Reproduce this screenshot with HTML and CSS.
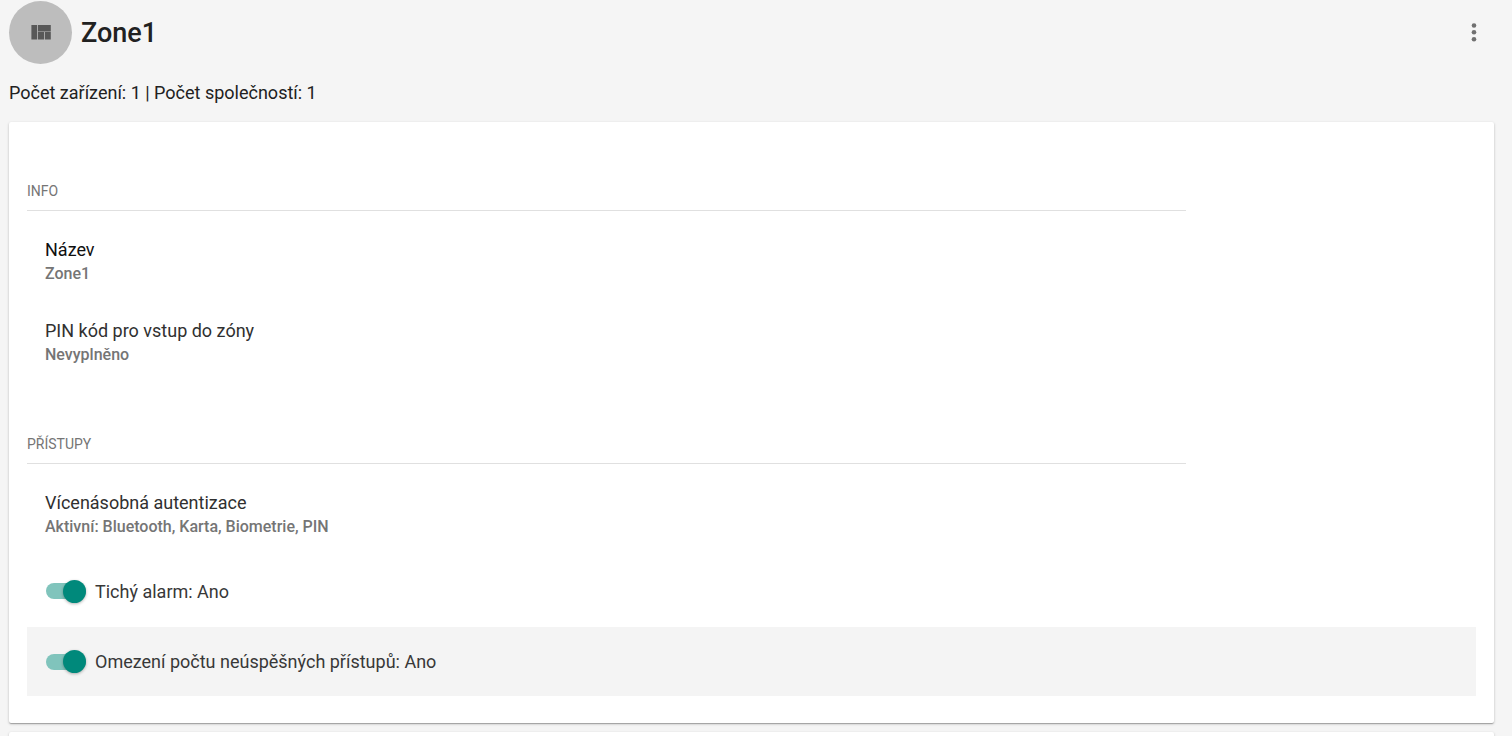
FILE: index.html
```html
<!DOCTYPE html>
<html lang="cs">
<head>
<meta charset="utf-8">
<title>Zone1</title>
<link rel="stylesheet" href="styles.css">
</head>
<body>
<main class="page">
  <header class="header">
    <span class="avatar">
      <svg class="avatar-icon" viewBox="0 0 20 15" aria-hidden="true"><path d="M.4 0h5.8v14.4H.4zM7 0h12.8v6.4H7zM7 7h6v7.4H7zM13.8 7h6v7.4h-6z"/></svg>
    </span>
    <h1 class="title">Zone1</h1>
    <button class="menu-button" type="button" aria-label="Menu">
      <svg class="menu-icon" viewBox="0 0 6 20" aria-hidden="true"><circle cx="3" cy="2.5" r="2.3"/><circle cx="3" cy="9.3" r="2.3"/><circle cx="3" cy="16.2" r="2.3"/></svg>
    </button>
  </header>
  <p class="summary">Počet zařízení: 1 | Počet společností: 1</p>

  <div class="card">
    <section class="section">
      <h2 class="section-title">INFO</h2>
      <div class="item">
        <h3 class="item-title item-title-strong">Název</h3>
        <p class="item-value">Zone1</p>
      </div>
      <div class="item">
        <h3 class="item-title">PIN kód pro vstup do zóny</h3>
        <p class="item-value">Nevyplněno</p>
      </div>
    </section>
    <section class="section">
      <h2 class="section-title">PŘÍSTUPY</h2>
      <div class="item">
        <h3 class="item-title">Vícenásobná autentizace</h3>
        <p class="item-value">Aktivní: Bluetooth, Karta, Biometrie, PIN</p>
      </div>
      <label class="toggle">
        <input class="switch" type="checkbox" role="switch" checked>
        <span>Tichý alarm: Ano</span>
      </label>
      <label class="toggle toggle-active">
        <input class="switch" type="checkbox" role="switch" checked>
        <span>Omezení počtu neúspěšných přístupů: Ano</span>
      </label>
    </section>
  </div>
  <div class="card card-rest"></div>
</main>
</body>
</html>
```
FILE: styles.css
```css
* {
  box-sizing: border-box;
}

body {
  margin: 0;
  background: #f5f5f5;
  color: #212121;
  font-family: Roboto, "Liberation Sans", sans-serif;
  font-size: 18px;
}

h1, h2, h3, p {
  margin: 0;
  font-weight: 400;
}

.page {
  display: flex;
  flex-direction: column;
  min-height: 100vh;
  padding: 1px 18px 0 9px;
}

.header {
  display: flex;
  align-items: center;
  gap: 9px;
}

.avatar {
  display: flex;
  align-items: center;
  justify-content: center;
  width: 63px;
  height: 63px;
  border-radius: 50%;
  background: #bdbdbd;
}

.avatar-icon {
  width: 20px;
  height: 15px;
  fill: #585858;
}

.title {
  flex: 1;
  font-size: 27px;
  font-weight: 500;
  line-height: 36px;
}

.menu-button {
  display: flex;
  align-items: center;
  justify-content: center;
  width: 40px;
  height: 40px;
  padding: 0;
  border: 0;
  background: none;
}

.menu-icon {
  width: 6px;
  height: 20px;
  fill: #707070;
}

.summary {
  padding: 18px 0;
  line-height: 22px;
}

.card {
  margin-bottom: 9px;
  padding: 54px 18px 27px;
  border-radius: 2px;
  background: #fff;
  box-shadow: 0 1px 3px rgba(0, 0, 0, 0.2), 0 1px 1px rgba(0, 0, 0, 0.14), 0 2px 1px -1px rgba(0, 0, 0, 0.12);
}

.card-rest {
  flex: 1;
  margin-bottom: 0;
  padding: 0;
  border-radius: 2px 2px 0 0;
}

.section + .section {
  margin-top: 46px;
}

.section-title {
  width: 80%;
  height: 35px;
  margin-bottom: 10px;
  padding-top: 4px;
  border-bottom: 1px solid #e0e0e0;
  color: #757575;
  font-size: 14px;
  line-height: 22px;
}

.item {
  display: flex;
  flex-direction: column;
  justify-content: center;
  min-height: 81px;
  padding: 0 18px;
}

.item-title {
  color: #303030;
  font-size: 18px;
  line-height: 22px;
}

.item-title-strong {
  color: #101010;
}

.item-value {
  margin-top: 2px;
  color: #757575;
  font-size: 16px;
  font-weight: 500;
  line-height: 22px;
}

.toggle {
  display: flex;
  align-items: center;
  gap: 9px;
  height: 72px;
  padding: 0 18px;
  color: #383838;
}

.toggle-active {
  height: 69px;
  background: #f4f4f4;
}

.switch {
  display: flex;
  align-items: center;
  justify-content: flex-end;
  width: 40px;
  height: 16px;
  margin: 0 0 0 1px;
  border-radius: 8px;
  background: #80c4bc;
  appearance: none;
}

.switch::before {
  content: "";
  width: 23px;
  height: 23px;
  border-radius: 50%;
  background: #00897b;
  box-shadow: 0 1px 3px rgba(0, 0, 0, 0.3);
}
```
